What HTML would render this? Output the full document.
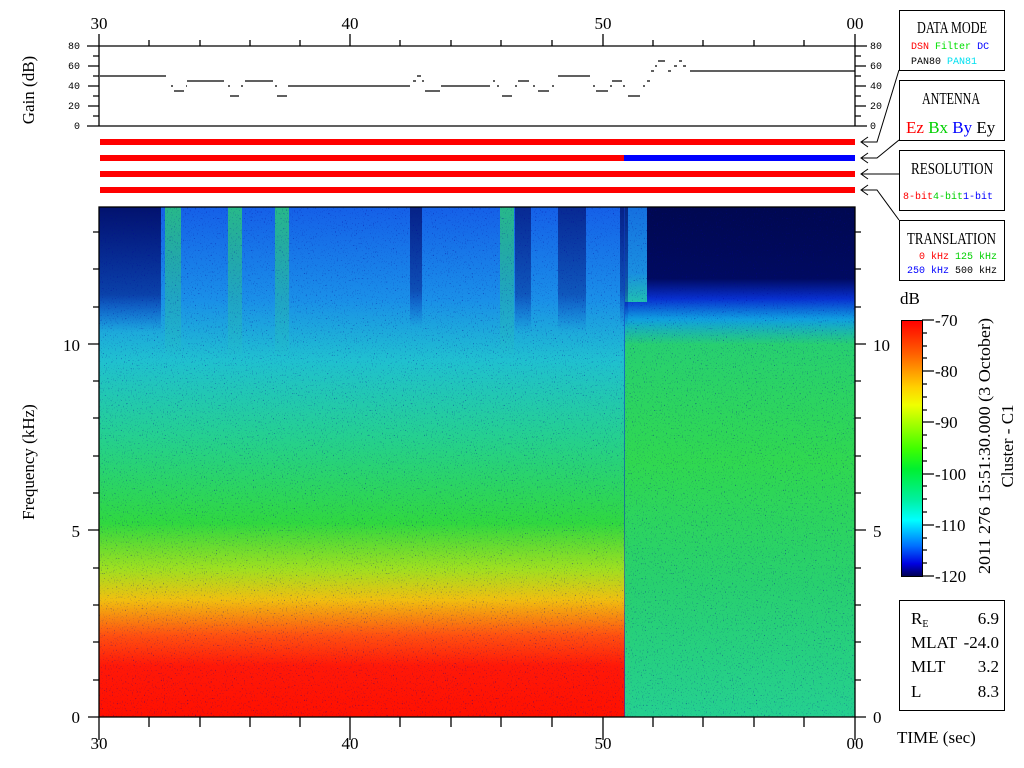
<!DOCTYPE html>
<html><head><meta charset="utf-8"><style>
html,body{margin:0;padding:0;background:#fff;width:1024px;height:768px;overflow:hidden}
svg{display:block}
.s{font-family:"Liberation Serif",serif;font-size:17px;fill:#000}
.m{font-family:"Liberation Mono",monospace;font-size:10px}
</style></head><body>
<svg width="1024" height="768" viewBox="0 0 1024 768" xmlns="http://www.w3.org/2000/svg">
<defs>
<linearGradient id="gl" x1="0" y1="0" x2="0" y2="1">
<stop offset="0" stop-color="#1560e8"/>
<stop offset="0.18" stop-color="#1a8fe8"/>
<stop offset="0.3" stop-color="#20c0d0"/>
<stop offset="0.45" stop-color="#25d090"/>
<stop offset="0.62" stop-color="#30d840"/>
<stop offset="0.71" stop-color="#a0e020"/>
<stop offset="0.77" stop-color="#f0c010"/>
<stop offset="0.84" stop-color="#ff5010"/>
<stop offset="0.9" stop-color="#ff1808"/>
<stop offset="1" stop-color="#ff1000"/>
</linearGradient>
<linearGradient id="gr" x1="0" y1="0" x2="0" y2="1">
<stop offset="0" stop-color="#000850"/>
<stop offset="0.14" stop-color="#000a60"/>
<stop offset="0.18" stop-color="#0830d0"/>
<stop offset="0.22" stop-color="#10a0e0"/>
<stop offset="0.27" stop-color="#28d070"/>
<stop offset="0.5" stop-color="#30d850"/>
<stop offset="0.75" stop-color="#28d070"/>
<stop offset="1" stop-color="#25d090"/>
</linearGradient>
<linearGradient id="gm" x1="0" y1="0" x2="0" y2="1">
<stop offset="0" stop-color="#1570e0"/>
<stop offset="0.7" stop-color="#1a90e0"/>
<stop offset="1" stop-color="#20c0b0"/>
</linearGradient>
<linearGradient id="dk" x1="0" y1="0" x2="0" y2="1">
<stop offset="0" stop-color="#000a60" stop-opacity="0.9"/>
<stop offset="0.7" stop-color="#001080" stop-opacity="0.6"/>
<stop offset="1" stop-color="#0020c0" stop-opacity="0"/>
</linearGradient>
<linearGradient id="lg" x1="0" y1="0" x2="0" y2="1">
<stop offset="0" stop-color="#30e060" stop-opacity="0.7"/>
<stop offset="1" stop-color="#30e060" stop-opacity="0"/>
</linearGradient>
<linearGradient id="cb" x1="0" y1="0" x2="0" y2="1">
<stop offset="0" stop-color="#ff0000"/>
<stop offset="0.13" stop-color="#ff6000"/>
<stop offset="0.26" stop-color="#ffd000"/>
<stop offset="0.33" stop-color="#f0ff00"/>
<stop offset="0.5" stop-color="#40ff00"/>
<stop offset="0.58" stop-color="#00f030"/>
<stop offset="0.7" stop-color="#00f0a0"/>
<stop offset="0.78" stop-color="#00ffff"/>
<stop offset="0.88" stop-color="#0070ff"/>
<stop offset="0.95" stop-color="#0000e0"/>
<stop offset="1" stop-color="#000050"/>
</linearGradient>
<filter id="nz" x="0" y="0" width="1" height="1">
<feTurbulence type="fractalNoise" baseFrequency="0.9 0.6" numOctaves="1" seed="3"/>
<feColorMatrix type="matrix" values="0 0 0 0 0  0 0 0 0 0  0 0 0 0 0.3  0 0 0 3 -1.9"/>
</filter>
</defs>

<!-- spectrogram -->
<rect x="99" y="207" width="526" height="510" fill="url(#gl)"/>
<rect x="625" y="207" width="230" height="510" fill="url(#gr)"/>
<rect x="625" y="207" width="22" height="95" fill="url(#gm)"/>
<rect x="99" y="207" width="62" height="125" fill="url(#dk)"/>
<rect x="410" y="207" width="12" height="120" fill="url(#dk)" opacity="0.8"/>
<rect x="515" y="207" width="16" height="125" fill="url(#dk)" opacity="0.7"/>
<rect x="558" y="207" width="28" height="125" fill="url(#dk)" opacity="0.7"/>
<rect x="620" y="207" width="8" height="120" fill="url(#dk)" opacity="0.8"/>
<rect x="165" y="207" width="16" height="150" fill="url(#lg)"/>
<rect x="228" y="207" width="14" height="150" fill="url(#lg)"/>
<rect x="275" y="207" width="14" height="150" fill="url(#lg)"/>
<rect x="500" y="207" width="14" height="150" fill="url(#lg)"/>
<rect x="99" y="207" width="756" height="510" filter="url(#nz)"/>
<line x1="624.5" y1="207" x2="624.5" y2="717" stroke="#1040c0" stroke-width="1" opacity="0.6"/>

<!-- spectrogram frame & ticks -->
<g stroke="#000" stroke-width="1.3" fill="none">
<rect x="99" y="207" width="756" height="510"/>
<path d="M99 717V740M350 717V740M603 717V740M855 717V740"/>
<path d="M149 717v10M200 717v10M250 717v10M300 717v10M400 717v10M451 717v10M501 717v10M552 717v10M653 717v10M703 717v10M754 717v10M804 717v10"/>
<path d="M88 717h11M88 530h11M88 344h11M93 680h6M93 642h6M93 605h6M93 568h6M93 493h6M93 456h6M93 418h6M93 381h6M93 307h6M93 269h6M93 232h6"/>
<path d="M855 717h11M855 530h11M855 344h11M855 680h6M855 642h6M855 605h6M855 568h6M855 493h6M855 456h6M855 418h6M855 381h6M855 307h6M855 269h6M855 232h6"/>
</g>

<!-- gain plot -->
<g stroke="#000" stroke-width="1.3" fill="none">
<path d="M99 34V126M855 34V126M87 46H99M87 126H99M855 46H867M855 126H867M99 46H855M99 126H855"/>
<path d="M93 56h6M88 66h11M93 76h6M88 86h11M93 96h6M88 106h11M93 116h6"/>
<path d="M855 56h6M855 66h11M855 76h6M855 86h11M855 96h6M855 106h11M855 116h6"/>
<path d="M350 34v12M603 34v12M149 40v6M200 40v6M250 40v6M300 40v6M400 40v6M451 40v6M501 40v6M552 40v6M653 40v6M703 40v6M754 40v6M804 40v6"/>
</g>
<path d="M100 76H166M171 86h2M174 91h10M186 86h1M187 81H224M228 86h2M230 96h9M241 86h2M245 81H273M275 86h2M277 96h10M288 86h1M289 86H410M413 81h3M417 76h4M422 81h2M425 91h15M441 86H490M493 81h2M497 86h2M502 96h10M515 86h2M518 81h11M533 86h2M538 91h11M552 86h2M558 76H590M593 86h2M596 91h12M610 86h2M612 81h10M623 86h2M628 96h12M643 86h2M647 81h3M651 71h3M655 66h2M658 61h7M668 71h3M674 66h3M679 61h3M683 66h3M690 71H855" stroke="#000" stroke-width="1.3" fill="none"/>

<!-- status bars -->
<rect x="100" y="139" width="755" height="6" fill="#ff0000"/>
<rect x="100" y="155" width="524" height="6" fill="#ff0000"/>
<rect x="624" y="155" width="231" height="6" fill="#0000ff"/>
<rect x="100" y="171" width="755" height="6" fill="#ff0000"/>
<rect x="100" y="187" width="755" height="6" fill="#ff0000"/>
<g stroke="#000" stroke-width="1" fill="none">
<path d="M862 142H877L899 70M868 137L861 142L868 147"/>
<path d="M862 158H877L899 140M868 153L861 158L868 163"/>
<path d="M862 174H899M868 169L861 174L868 179"/>
<path d="M862 190H877L899 220M868 185L861 190L868 195"/>
<rect x="899.5" y="10.5" width="105" height="60"/>
<rect x="899.5" y="80.5" width="105" height="60"/>
<rect x="899.5" y="150.5" width="105" height="60"/>
<rect x="899.5" y="220.5" width="105" height="60"/>
<rect x="899.5" y="600.5" width="105" height="110"/>
</g>

<!-- top/bottom labels -->
<g class="s" text-anchor="middle" font-size="18">
<text x="99" y="29">30</text><text x="350" y="29">40</text><text x="603" y="29">50</text><text x="855" y="29">00</text>
<text x="99" y="749">30</text><text x="350" y="749">40</text><text x="603" y="749">50</text><text x="855" y="749">00</text>
</g>
<g class="s" text-anchor="end">
<text x="80" y="723">0</text><text x="80" y="537">5</text><text x="80" y="351">10</text>
</g>
<g class="s">
<text x="873" y="723">0</text><text x="873" y="537">5</text><text x="873" y="351">10</text>
</g>
<g class="m" fill="#000" text-anchor="end">
<text x="80" y="49">80</text><text x="80" y="69">60</text><text x="80" y="89">40</text><text x="80" y="109">20</text><text x="80" y="129">0</text>
</g>
<g class="m" fill="#000">
<text x="870" y="49">80</text><text x="870" y="69">60</text><text x="870" y="89">40</text><text x="870" y="109">20</text><text x="870" y="129">0</text>
</g>
<text class="s" transform="translate(34,462) rotate(-90)" text-anchor="middle">Frequency (kHz)</text>
<text class="s" transform="translate(34,90) rotate(-90)" text-anchor="middle">Gain (dB)</text>

<!-- panel boxes text -->
<g class="s" font-size="15">
<text x="917" y="33" textLength="70" lengthAdjust="spacingAndGlyphs">DATA MODE</text>
<text x="922" y="104" textLength="58" lengthAdjust="spacingAndGlyphs">ANTENNA</text>
<text x="911" y="174" textLength="82" lengthAdjust="spacingAndGlyphs">RESOLUTION</text>
<text x="907" y="244" textLength="89" lengthAdjust="spacingAndGlyphs">TRANSLATION</text>
</g>
<text class="m" x="911" y="49"><tspan fill="#ff0000">DSN</tspan> <tspan fill="#00e000">Filter</tspan> <tspan fill="#0000ff">DC</tspan></text>
<text class="m" x="911" y="64"><tspan fill="#000">PAN80</tspan>   <tspan fill="#00e0f0">PAN81</tspan></text>
<text class="s" x="906" y="133" font-size="16"><tspan fill="#ff0000">Ez</tspan> <tspan fill="#00d000">Bx</tspan> <tspan fill="#0000ff">By</tspan> <tspan fill="#000">Ey</tspan></text>
<text class="m" x="903" y="199"><tspan fill="#ff0000">8-bit</tspan><tspan fill="#00d000">4-bit</tspan><tspan fill="#0000ff">1-bit</tspan></text>
<text class="m" x="919" y="259"><tspan fill="#ff0000">0 kHz</tspan> <tspan fill="#00d000">125 kHz</tspan></text>
<text class="m" x="907" y="273"><tspan fill="#0000ff">250 kHz</tspan> <tspan fill="#000">500 kHz</tspan></text>

<!-- colorbar -->
<text class="s" x="900" y="304" font-size="15">dB</text>
<rect x="901.5" y="320.5" width="21" height="256" fill="url(#cb)" stroke="#000"/>
<g stroke="#000" stroke-width="1.2">
<path d="M922 320h12M922 371h12M922 422h12M922 474h12M922 525h12M922 576h12"/>
<path d="M922 333h5M922 346h5M922 358h5M922 384h5M922 397h5M922 410h5M922 435h5M922 448h5M922 461h5M922 486h5M922 499h5M922 512h5M922 538h5M922 550h5M922 563h5"/>
</g>
<g class="s" font-size="16">
<text x="935" y="326">-70</text><text x="935" y="377">-80</text><text x="935" y="428">-90</text><text x="935" y="480">-100</text><text x="935" y="531">-110</text><text x="935" y="582">-120</text>
</g>
<text class="s" transform="translate(990,446) rotate(-90)" text-anchor="middle" font-size="16" textLength="256" lengthAdjust="spacingAndGlyphs">2011 276 15:51:30.000 (3 October)</text>
<text class="s" transform="translate(1013,446) rotate(-90)" text-anchor="middle" font-size="16">Cluster - C1</text>

<!-- stats box -->
<g class="s" font-size="16">
<text x="911" y="624">R<tspan font-size="10" dy="3">E</tspan></text>
<text x="911" y="648">MLAT</text>
<text x="911" y="672">MLT</text>
<text x="911" y="697">L</text>
</g>
<g class="s" font-size="16" text-anchor="end">
<text x="999" y="624">6.9</text><text x="999" y="648">-24.0</text><text x="999" y="672">3.2</text><text x="999" y="697">8.3</text>
</g>
<text class="s" x="897" y="743" font-size="16">TIME (sec)</text>
</svg>
</body></html>
